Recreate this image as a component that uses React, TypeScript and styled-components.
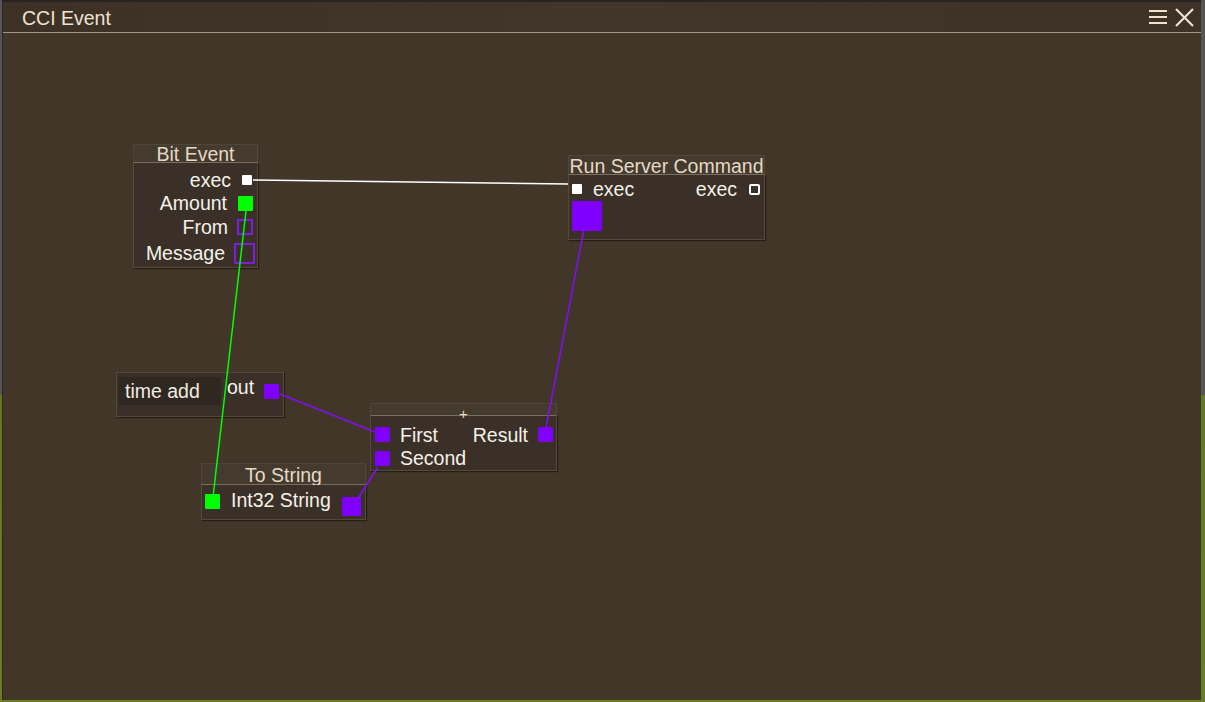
import React from "react";
import styled, { createGlobalStyle } from "styled-components";

const Global = createGlobalStyle`
  html, body {
    margin: 0;
    padding: 0;
    width: 1205px;
    height: 702px;
    overflow: hidden;
    background: linear-gradient(to bottom, #57535a 0, #57535a 395px, #66781f 395px, #6b7d22 702px);
    font-family: "Liberation Sans", Arial, sans-serif;
  }
`;

const Window = styled.div`
  margin: 0 4px 0 2px;
  height: 700px;
  display: flex;
  flex-direction: column;
  background: #423628;
  border-top: 2px solid #2a221d;
  border-left: 1px solid #2f2720;
  box-sizing: border-box;
`;

const TitleBar = styled.div`
  height: 30px;
  flex: 0 0 30px;
  display: flex;
  align-items: center;
  justify-content: space-between;
  padding: 0 7px 0 19px;
  background: linear-gradient(to right, #3d3126, #42362a 50%, #3e3227);
  border-bottom: 1px solid #a3978a;
  color: #efe3cf;
  font-size: 19.5px;
`;

const TitleText = styled.span`
  line-height: 30px;
  padding-top: 2px;
`;

const TitleButtons = styled.div`
  display: flex;
  align-items: center;
  gap: 8px;
`;

const Canvas = styled.div`
  flex: 1;
  position: relative;
  background: #423629;
`;

const Wires = styled.svg`
  position: absolute;
  left: 0;
  top: 0;
  width: 100%;
  height: 100%;
  pointer-events: none;
  z-index: 2;
`;

const Node = styled.div<{ $x: number; $y: number; $w: number }>`
  position: absolute;
  left: ${(p) => p.$x}px;
  top: ${(p) => p.$y}px;
  width: ${(p) => p.$w}px;
  z-index: 1;
  display: flex;
  flex-direction: column;
`;

const NodeHeader = styled.div<{ $h: number; $size?: number }>`
  height: ${(p) => p.$h}px;
  box-sizing: border-box;
  background: #443a2e;
  border: 1px solid #4f4538;
  border-bottom: 1px solid #7a6e60;
  color: #e6d9c5;
  font-size: ${(p) => p.$size ?? 19.5}px;
  line-height: ${(p) => p.$h}px;
  text-align: center;
  white-space: nowrap;
  overflow: visible;
`;

const PlusMark = styled.span`
  position: relative;
  top: 3px;
`;

const NodeBody = styled.div<{ $h: number; $pad?: string }>`
  height: ${(p) => p.$h}px;
  box-sizing: border-box;
  background: #3a3027;
  border: 1px solid #54493b;
  border-top: none;
  box-shadow: 1px 1px 1px rgba(20, 14, 8, 0.6);
  padding: ${(p) => p.$pad ?? "0"};
  display: flex;
  flex-direction: column;
`;

const Row = styled.div<{ $h: number; $justify?: string; $gap?: number }>`
  height: ${(p) => p.$h}px;
  display: flex;
  align-items: center;
  justify-content: ${(p) => p.$justify ?? "flex-start"};
  gap: ${(p) => p.$gap ?? 8}px;
`;

const Group = styled.div<{ $gap: number; $offset?: number }>`
  display: flex;
  align-items: center;
  gap: ${(p) => p.$gap}px;
  margin-top: ${(p) => p.$offset ?? 0}px;
`;

const Label = styled.span<{ $offset?: number }>`
  color: #f4f0ea;
  font-size: 19.5px;
  line-height: 22px;
  white-space: nowrap;
  margin-top: ${(p) => p.$offset ?? 0}px;
`;

const PinSlot = styled.div`
  width: 22px;
  display: flex;
  justify-content: center;
  align-items: center;
`;

const Pin = styled.div<{ $size: number; $color: string; $outline?: boolean; $dx?: number; $dy?: number }>`
  width: ${(p) => p.$size}px;
  height: ${(p) => p.$size}px;
  box-sizing: border-box;
  background: ${(p) => (p.$outline ? "transparent" : p.$color)};
  border: ${(p) => (p.$outline ? `2px solid ${p.$color}` : "none")};
  border-radius: ${(p) => (p.$size <= 11 && p.$outline ? "2px" : "1px")};
  flex: 0 0 auto;
  position: relative;
  z-index: 3;
  margin-left: ${(p) => p.$dx ?? 0}px;
  margin-top: ${(p) => p.$dy ?? 0}px;
`;

const FlatNode = styled(Node)<{ $h: number }>`
  height: ${(p) => p.$h}px;
  box-sizing: border-box;
  background: #3a3027;
  border: 1px solid #54493b;
  box-shadow: 1px 1px 1px rgba(20, 14, 8, 0.6);
  flex-direction: row;
  align-items: flex-start;
  padding: 4px 4px 0 2px;
`;

const InputField = styled.div`
  width: 102px;
  height: 28px;
  box-sizing: border-box;
  background: #2f2820;
  color: #f1ebe0;
  font-size: 19.5px;
  line-height: 28px;
  padding-left: 6px;
  white-space: nowrap;
`;

const OutRow = styled.div`
  flex: 1;
  height: 28px;
  display: flex;
  align-items: center;
  justify-content: space-between;
  padding-left: 6px;
  margin-top: -4px;
`;

const PURPLE = "#8000ff";
const WIRE_PURPLE = "#7f10ee";
const GREEN = "#00ff00";
const WHITE = "#ffffff";

export default function App() {
  return (
    <>
      <Global />
      <Window>
        <TitleBar>
          <TitleText>CCI Event</TitleText>
          <TitleButtons>
            <svg width="18" height="16" viewBox="0 0 18 16">
              <g stroke="#efe3cf" strokeWidth="2">
                <line x1="0" y1="2" x2="18" y2="2" />
                <line x1="0" y1="8" x2="18" y2="8" />
                <line x1="0" y1="14" x2="18" y2="14" />
              </g>
            </svg>
            <svg width="19" height="19" viewBox="0 0 19 19">
              <g stroke="#efe3cf" strokeWidth="2.2">
                <line x1="1" y1="1" x2="18" y2="18" />
                <line x1="18" y1="1" x2="1" y2="18" />
              </g>
            </svg>
          </TitleButtons>
        </TitleBar>
        <Canvas>
          <Node $x={130} $y={111} $w={125}>
            <NodeHeader $h={19}>Bit Event</NodeHeader>
            <NodeBody $h={105} $pad="5px 2px 0 0">
              <Row $h={24} $justify="flex-end" $gap={2}>
                <Label>exec</Label>
                <PinSlot>
                  <Pin $size={10} $color={WHITE} $dx={6} />
                </PinSlot>
              </Row>
              <Row $h={24} $justify="flex-end" $gap={6}>
                <Label>Amount</Label>
                <PinSlot>
                  <Pin $size={15} $color={GREEN} $dx={2} />
                </PinSlot>
              </Row>
              <Row $h={25} $justify="flex-end" $gap={5}>
                <Label>From</Label>
                <PinSlot>
                  <Pin $size={16} $color="#7a1fe0" $outline $dx={2} />
                </PinSlot>
              </Row>
              <Row $h={28} $justify="flex-end" $gap={8}>
                <Label>Message</Label>
                <PinSlot>
                  <Pin $size={21} $color="#7a1fe0" $outline />
                </PinSlot>
              </Row>
            </NodeBody>
          </Node>

          <Node $x={565} $y={122} $w={197}>
            <NodeHeader $h={20}>Run Server Command</NodeHeader>
            <NodeBody $h={65} $pad="4px 4px 0 3px">
              <Row $h={20} $justify="space-between">
                <Group $gap={11}>
                  <Pin $size={10} $color={WHITE} />
                  <Label>exec</Label>
                </Group>
                <Group $gap={12}>
                  <Label>exec</Label>
                  <Pin $size={11} $color={WHITE} $outline />
                </Group>
              </Row>
              <Pin $size={30} $color={PURPLE} $dy={2} />
            </NodeBody>
          </Node>

          <FlatNode $x={113} $y={339} $w={168} $h={45}>
            <InputField>time add</InputField>
            <OutRow>
              <Label>out</Label>
              <Pin $size={15} $color={PURPLE} $dy={8} />
            </OutRow>
          </FlatNode>

          <Node $x={367} $y={370} $w={187}>
            <NodeHeader $h={13} $size={15}>
              <PlusMark>+</PlusMark>
            </NodeHeader>
            <NodeBody $h={55} $pad="7px 3px 0 4px">
              <Row $h={25} $justify="space-between">
                <Group $gap={10}>
                  <Pin $size={15} $color={PURPLE} />
                  <Label>First</Label>
                </Group>
                <Group $gap={10}>
                  <Label>Result</Label>
                  <Pin $size={15} $color={PURPLE} />
                </Group>
              </Row>
              <Row $h={25}>
                <Group $gap={10}>
                  <Pin $size={15} $color={PURPLE} />
                  <Label>Second</Label>
                </Group>
              </Row>
            </NodeBody>
          </Node>

          <Node $x={198} $y={430} $w={165}>
            <NodeHeader $h={22}>To String</NodeHeader>
            <NodeBody $h={35} $pad="2px 4px 0 3px">
              <Row $h={35} $justify="space-between">
                <Group $gap={11}>
                  <Pin $size={15} $color={GREEN} $dy={-4} />
                  <Label $offset={-6}>Int32 String</Label>
                </Group>
                <Pin $size={19} $color={PURPLE} $dy={6} />
              </Row>
            </NodeBody>
          </Node>

          <Wires viewBox="0 0 1198 667">
            <line x1="250" y1="147" x2="565" y2="151" stroke={WHITE} strokeWidth="1.6" />
            <line x1="243" y1="178" x2="210" y2="464" stroke={GREEN} strokeWidth="1.5" />
            <line x1="543" y1="395" x2="581" y2="196" stroke={WIRE_PURPLE} strokeWidth="1.6" />
            <line x1="277" y1="361" x2="372" y2="399" stroke={WIRE_PURPLE} strokeWidth="1.6" />
            <line x1="354.6" y1="466" x2="374.7" y2="434.5" stroke={WIRE_PURPLE} strokeWidth="1.6" />
          </Wires>
        </Canvas>
      </Window>
    </>
  );
}
